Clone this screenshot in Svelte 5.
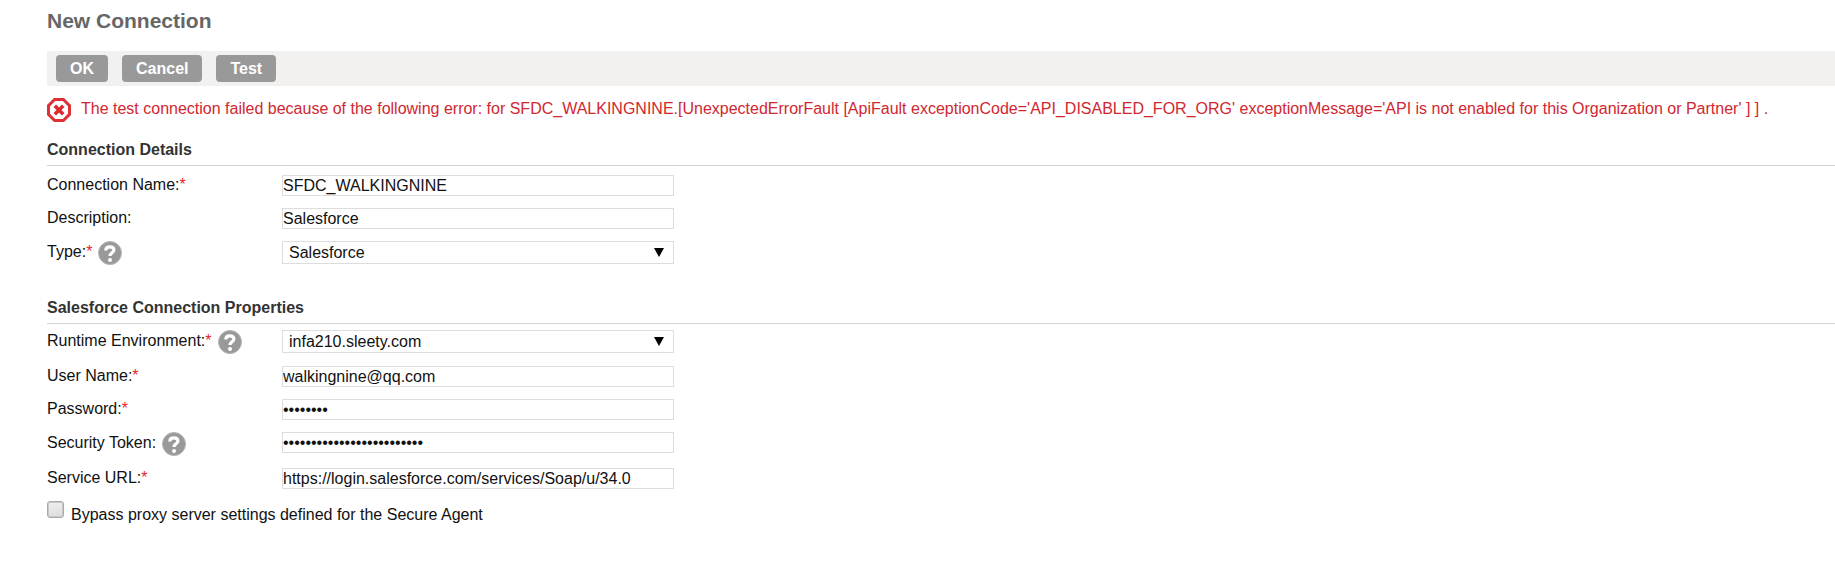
<script>
  const sections = [
    {
      title: 'Connection Details',
      fields: [
        { id: 'name', label: 'Connection Name:', required: true, value: 'SFDC_WALKINGNINE' },
        { id: 'description', label: 'Description:', value: 'Salesforce' },
        { id: 'type', label: 'Type:', required: true, help: true, kind: 'select', value: 'Salesforce' }
      ]
    },
    {
      title: 'Salesforce Connection Properties',
      compact: true,
      fields: [
        { id: 'runtime', label: 'Runtime Environment:', required: true, help: true, kind: 'select', value: 'infa210.sleety.com' },
        { id: 'user', label: 'User Name:', required: true, value: 'walkingnine@qq.com' },
        { id: 'password', label: 'Password:', required: true, kind: 'password', value: '00000000' },
        { id: 'token', label: 'Security Token:', help: true, kind: 'password', value: '0000000000000000000000000' },
        { id: 'url', label: 'Service URL:', required: true, value: 'https://login.salesforce.com/services/Soap/u/34.0' }
      ]
    }
  ];
</script>

<main>
  <h1>New Connection</h1>
  <div class="toolbar">
    <button type="button">OK</button>
    <button type="button">Cancel</button>
    <button type="button">Test</button>
  </div>

  <div class="error" role="alert">
    <svg width="24" height="24" viewBox="0 0 24 24" aria-hidden="true">
      <path d="M7.6 1.5h8.8l6.1 6.1v8.8l-6.1 6.1H7.6l-6.1-6.1V7.6z" fill="#fff" stroke="#dc3237" stroke-width="3" />
      <path d="M7.8 7.8l8.4 8.4M16.2 7.8l-8.4 8.4" stroke="#dc2a30" stroke-width="3.6" />
    </svg>
    <p>The test connection failed because of the following error: for SFDC_WALKINGNINE.[UnexpectedErrorFault [ApiFault exceptionCode='API_DISABLED_FOR_ORG' exceptionMessage='API is not enabled for this Organization or Partner' ] ] .</p>
  </div>

  <form>
    {#each sections as section}
      <section>
        <h2>{section.title}</h2>
        <div class="fields" class:compact={section.compact}>
          {#each section.fields as field}
            <div class="row">
              <div class="caption" class:with-help={field.help}>
                <label for={field.id}>{field.label}{#if field.required}<span class="required">*</span>{/if}</label>
                {#if field.help}
                  <button type="button" class="help" aria-label="Help">
                    <svg width="24" height="24" viewBox="0 0 24 24" aria-hidden="true">
                      <circle cx="12" cy="12" r="11.5" fill="#999" stroke="#b5b5b5" />
                      <path d="M7.8 9.4C7.8 7 9.4 5.8 11.8 5.8s4.1 1.2 4.1 3.2c0 2.7-3.9 2.9-3.9 6" fill="none" stroke="#fff" stroke-width="3.2" />
                      <circle cx="12" cy="18.9" r="2" fill="#fff" />
                    </svg>
                  </button>
                {/if}
              </div>
              {#if field.kind === 'select'}
                <div class="select">
                  <select id={field.id}><option>{field.value}</option></select>
                  <svg width="10" height="9" viewBox="0 0 10 9" aria-hidden="true"><path d="M0 0h10L5 9z" /></svg>
                </div>
              {:else}
                <input id={field.id} type={field.kind ?? 'text'} value={field.value} autocomplete="off" />
              {/if}
            </div>
          {/each}
        </div>
      </section>
    {/each}

    <div class="check">
      <input id="bypass" type="checkbox" />
      <label for="bypass">Bypass proxy server settings defined for the Secure Agent</label>
    </div>
  </form>
</main>

<style>
  :global(body) {
    background: #fff;
  }
  main,
  button,
  input,
  select {
    font-family: 'Liberation Sans', Arial, sans-serif;
    font-size: 16px;
    line-height: 19px;
  }
  main {
    padding: 9px 0 32px 47px;
    color: #111;
  }
  h1,
  h2,
  p {
    margin: 0;
  }
  h1 {
    font-size: 21px;
    line-height: 24px;
    color: #666;
  }
  .toolbar {
    display: flex;
    align-items: center;
    gap: 14px;
    margin-top: 18px;
    padding: 4px 9px;
    background: #f2f1f0;
  }
  .toolbar button {
    padding: 4px 14px;
    border: 0;
    border-radius: 4px;
    background: #999;
    color: #fff;
    font-weight: bold;
  }
  .error {
    display: flex;
    gap: 10px;
    margin-top: 12px;
    line-height: 21px;
    color: #d22730;
  }
  .error svg {
    flex: none;
  }
  h2 {
    padding-bottom: 6px;
    border-bottom: 1px solid #d3d3d3;
    font-size: 16px;
    line-height: 19px;
    color: #333;
  }
  form {
    margin-top: 18px;
  }
  .fields {
    padding: 3px 0 27px;
  }
  .fields.compact {
    padding: 0;
  }
  .row {
    display: grid;
    grid-template-columns: 235px minmax(0, 392px);
    align-items: start;
    padding: 6px 0;
  }
  .caption {
    display: flex;
    gap: 6px;
  }
  .with-help {
    line-height: 21px;
  }
  .required {
    color: #e8232f;
  }
  .help {
    display: flex;
    padding: 0;
    border: 0;
    background: none;
  }
  .row input,
  select {
    box-sizing: border-box;
    width: 100%;
    margin: 0;
    border: 1px solid #ddd;
    border-radius: 0;
    background: #fff;
    color: #111;
  }
  .row input {
    height: 21px;
    padding: 0;
  }
  .select {
    position: relative;
  }
  select {
    display: block;
    height: 23px;
    padding: 0 24px 0 6px;
    appearance: none;
  }
  .select svg {
    position: absolute;
    top: 7px;
    right: 10px;
    pointer-events: none;
  }
  .check {
    display: flex;
    gap: 7px;
    padding-top: 6px;
  }
  .check input {
    width: 17px;
    height: 17px;
    margin: 0;
    border: 1px solid #aaa;
    border-radius: 3px;
    background: linear-gradient(#eee, #ddd);
    box-shadow: inset 0 0 0 1px #c8c8c8;
    appearance: none;
  }
  .check label {
    padding-top: 4px;
  }
</style>
